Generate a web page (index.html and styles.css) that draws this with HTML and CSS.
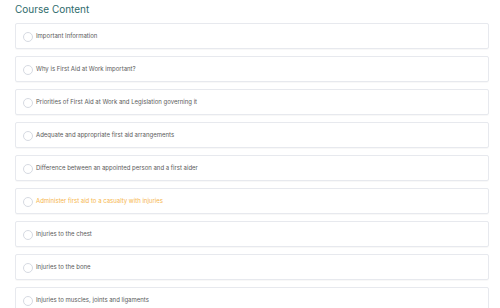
FILE: index.html
```html
<!DOCTYPE html>
<html lang="en">
<head>
  <meta charset="UTF-8">
  <title>Course Content</title>
  <link rel="stylesheet" href="styles.css">
</head>
<body>
  <div class="course-content">
    <h2 class="course-title">Course Content</h2>
    <ul class="lesson-list">
      <li class="lesson"><span class="lesson-check"></span><span class="lesson-name">Important Information</span></li>
      <li class="lesson"><span class="lesson-check"></span><span class="lesson-name">Why is First Aid at Work important?</span></li>
      <li class="lesson"><span class="lesson-check"></span><span class="lesson-name">Priorities of First Aid at Work and Legislation governing it</span></li>
      <li class="lesson"><span class="lesson-check"></span><span class="lesson-name">Adequate and appropriate first aid arrangements</span></li>
      <li class="lesson"><span class="lesson-check"></span><span class="lesson-name">Difference between an appointed person and a first aider</span></li>
      <li class="lesson active"><span class="lesson-check"></span><span class="lesson-name">Administer first aid to a casualty with injuries</span></li>
      <li class="lesson"><span class="lesson-check"></span><span class="lesson-name">Injuries to the chest</span></li>
      <li class="lesson"><span class="lesson-check"></span><span class="lesson-name">Injuries to the bone</span></li>
      <li class="lesson"><span class="lesson-check"></span><span class="lesson-name">Injuries to muscles, joints and ligaments</span></li>
    </ul>
  </div>
</body>
</html>
```

FILE: styles.css
```css
body {
  margin: 0;
  padding: 0;
  background: #fff;
  font-family: 'Inter', 'Noto Sans', sans-serif;
}

.course-content {
  padding: 2px 11px 0 15px;
}

.course-title {
  margin: 0 0 7px 0;
  font-size: 10px;
  font-weight: 400;
  line-height: 14px;
  color: #2e6b6b;
}

.lesson-list {
  list-style: none;
  margin: 0;
  padding: 0;
  display: flex;
  flex-direction: column;
  gap: 7px;
}

.lesson {
  height: 26px;
  box-sizing: border-box;
  border: 1px solid #e7e9ee;
  border-radius: 2px;
  box-shadow: 0 1px 1px rgba(0, 0, 0, 0.03);
  display: flex;
  align-items: center;
  padding-left: 7px;
}

.lesson-check {
  width: 8px;
  height: 8px;
  border: 1px solid #d6dae2;
  border-radius: 50%;
  margin-top: 2px;
  margin-right: 3px;
  flex-shrink: 0;
}

.lesson-name {
  font-size: 6px;
  font-weight: 400;
  color: #5a5a5a;
  margin-bottom: 1px;
}

.lesson.active .lesson-name {
  color: #f6b64c;
}
```
